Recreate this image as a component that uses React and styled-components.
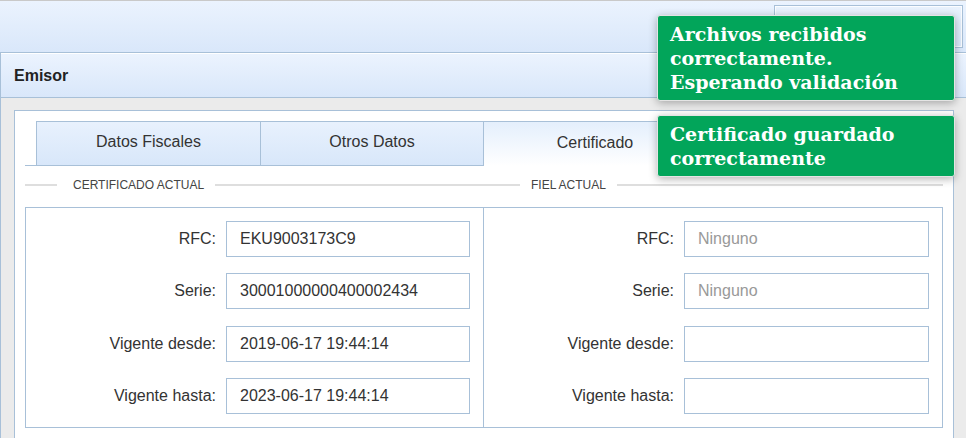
import React from "react";
import styled, { createGlobalStyle } from "styled-components";

const GlobalStyle = createGlobalStyle`
  html, body {
    margin: 0;
    padding: 0;
    background: #ebebeb;
    font-family: "Liberation Sans", Arial, sans-serif;
    color: #333;
  }
`;

const Page = styled.div`
  width: 966px;
  height: 438px;
  overflow: hidden;
  position: relative;
  border-top: 1px solid #c9c9c9;
  box-sizing: border-box;
`;

const TopBar = styled.div`
  height: 52px;
  display: flex;
  justify-content: flex-end;
  align-items: flex-start;
  padding: 4px 3px 0 0;
  box-sizing: border-box;
  background: linear-gradient(#ebf3fe, #d9e7fa);
  border-bottom: 1px solid #a8c0d8;
`;

const UserBox = styled.div`
  width: 189px;
  height: 43px;
  box-sizing: border-box;
  border: 1px solid #a8c0d8;
  box-shadow: inset 0 0 0 1px rgba(255, 255, 255, 0.8);
  background: linear-gradient(#e9f2fd, #dae8fa);
`;

const Panel = styled.section`
  border-left: 1px solid #a8c0d8;
`;

const PanelHeader = styled.header`
  height: 43px;
  display: flex;
  align-items: center;
  padding-left: 13px;
  border-top: 1px solid #fff;
  border-bottom: 1px solid #a8c0d8;
  background: linear-gradient(#ebf3fe, #d9e7fa);
  font-weight: bold;
  font-size: 16px;
  color: #222;
`;

const PanelBody = styled.div`
  padding: 12px 12px 0 13px;
`;

const Card = styled.div`
  background: #fff;
  border: 1px solid #a8c0d8;
  padding: 10px 10px 20px;
`;

const TabBar = styled.div`
  display: flex;
  padding-left: 11px;
  border-bottom: 1px solid #a8c0d8;
`;

const Tab = styled.div`
  width: 224px;
  display: flex;
  align-items: center;
  justify-content: center;
  padding-bottom: 3px;
  box-sizing: border-box;
  font-size: 16px;
  color: #333;
  border: 1px solid #a8c0d8;
  border-bottom: none;
  margin-left: -1px;
  &:first-child {
    margin-left: 0;
    width: 225px;
  }
  margin-bottom: ${(p) => (p.$active ? "-1px" : "0")};
  height: ${(p) => (p.$active ? "45px" : "44px")};
  background: ${(p) =>
    p.$active
      ? "linear-gradient(#e4effc, #ffffff)"
      : "linear-gradient(#e8f1fd, #d8e7fa)"};
`;

const Sections = styled.div`
  display: grid;
  grid-template-columns: 1fr 1fr;
`;

const Legend = styled.div`
  height: 41px;
  box-sizing: border-box;
  padding-bottom: 3px;
  display: flex;
  align-items: center;
  font-size: 12px;
  color: #444;
  &::before,
  &::after {
    content: "";
    height: 2px;
    background: #dedede;
  }
  &::before {
    width: ${(p) => p.$lead}px;
  }
  &::after {
    flex: 1;
  }
`;

const LegendText = styled.span`
  padding: 0 11px 0 ${(p) => p.$gap}px;
`;

const FieldBox = styled.div`
  border: 1px solid #a8c0d8;
  margin-left: ${(p) => (p.$joined ? "-1px" : "0")};
  padding: 13px 13px 13px 0;
  display: grid;
  grid-template-columns: 190px 1fr;
  column-gap: 10px;
  row-gap: 16.4px;
  align-items: center;
`;

const Label = styled.label`
  text-align: right;
  font-size: 16px;
  color: #333;
`;

const Field = styled.div`
  height: 36px;
  box-sizing: border-box;
  border: 1px solid #a8c0d8;
  padding-left: 13px;
  display: flex;
  align-items: center;
  font-size: 16px;
  color: ${(p) => (p.$empty ? "#999" : "#333")};
`;

const Toasts = styled.div`
  position: absolute;
  top: 14px;
  right: 11px;
  display: flex;
  flex-direction: column;
  gap: 14px;
`;

const Toast = styled.div`
  width: 298px;
  box-sizing: border-box;
  padding: 6px 12px;
  background: #02a55a;
  border: 1px solid #e4e4e4;
  border-radius: 3px;
  box-shadow: 0 2px 8px rgba(0, 0, 0, 0.3);
  color: #fff;
  font-family: "DejaVu Serif", serif;
  font-weight: bold;
  font-size: 19px;
  line-height: 24px;
`;

const certificado = [
  ["RFC:", "EKU9003173C9"],
  ["Serie:", "30001000000400002434"],
  ["Vigente desde:", "2019-06-17 19:44:14"],
  ["Vigente hasta:", "2023-06-17 19:44:14"],
];

const fiel = [
  ["RFC:", "Ninguno"],
  ["Serie:", "Ninguno"],
  ["Vigente desde:", ""],
  ["Vigente hasta:", ""],
];

const FieldGroup = ({ rows, joined }) => (
  <FieldBox $joined={joined}>
    {rows.map(([label, value]) => (
      <React.Fragment key={label}>
        <Label>{label}</Label>
        <Field $empty={value === "Ninguno"}>{value}</Field>
      </React.Fragment>
    ))}
  </FieldBox>
);

export default function App() {
  return (
    <Page>
      <GlobalStyle />
      <TopBar>
        <UserBox />
      </TopBar>
      <Panel>
        <PanelHeader>Emisor</PanelHeader>
        <PanelBody>
          <Card>
            <TabBar>
              <Tab>Datos Fiscales</Tab>
              <Tab>Otros Datos</Tab>
              <Tab $active>Certificado</Tab>
            </TabBar>
            <Sections>
              <Legend $lead={32}>
                <LegendText $gap={16}>CERTIFICADO ACTUAL</LegendText>
              </Legend>
              <Legend $lead={36}>
                <LegendText $gap={11}>FIEL ACTUAL</LegendText>
              </Legend>
              <FieldGroup rows={certificado} />
              <FieldGroup rows={fiel} joined />
            </Sections>
          </Card>
        </PanelBody>
      </Panel>
      <Toasts>
        <Toast>
          Archivos recibidos
          <br />
          correctamente.
          <br />
          Esperando validación
        </Toast>
        <Toast>
          Certificado guardado
          <br />
          correctamente
        </Toast>
      </Toasts>
    </Page>
  );
}
